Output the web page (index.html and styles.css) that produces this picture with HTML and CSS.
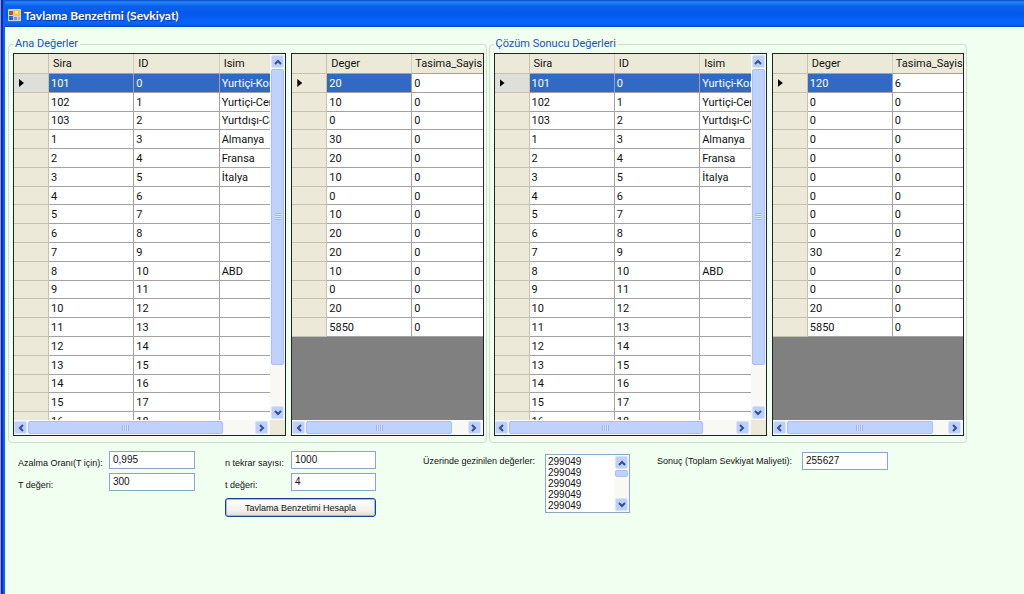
FILE: index.html
```
<!DOCTYPE html>
<html lang="tr">
<head>
<meta charset="utf-8">
<meta name="viewport" content="width=device-width, initial-scale=1">
<title>Tavlama Benzetimi (Sevkiyat)</title>
<link rel="stylesheet" href="styles.css">
</head>
<body>
<svg class="sprites" aria-hidden="true">
  <symbol id="up" viewBox="0 0 8 6"><path d="M1 5 4 2l3 3" /></symbol>
  <symbol id="down" viewBox="0 0 8 6"><path d="M1 1l3 3 3-3" /></symbol>
  <symbol id="left" viewBox="0 0 6 8"><path d="M5 1 2 4l3 3" /></symbol>
  <symbol id="right" viewBox="0 0 6 8"><path d="M1 1l3 3-3 3" /></symbol>
</svg>
<div class="window">
  <header class="titlebar">
    <svg class="app-icon" viewBox="0 0 13 13" aria-hidden="true">
      <rect width="13" height="13" rx="1" fill="#cfd3da"/>
      <rect x="1" y="2" width="4" height="4" fill="#c2502c"/>
      <rect x="6" y="1" width="6" height="6" fill="#f3c63a"/>
      <rect x="7" y="2" width="3" height="3" fill="#fbe58a"/>
      <rect x="1" y="7" width="4" height="4" fill="#2f5fc4"/>
      <rect x="6" y="8" width="3" height="3" fill="#8b97ad"/>
      <rect x="10" y="8" width="2" height="3" fill="#a9b0bf"/>
      <rect y="12" width="13" height="1" fill="#5c6f9a"/>
    </svg>
    <h1 class="title">Tavlama Benzetimi (Sevkiyat)</h1>
  </header>
  <main class="client">
    <div class="groups" id="groups"></div>
    <form class="params">
      <div class="fields fields-a">
        <label for="rate">Azalma Oranı(T için):</label><input id="rate" type="text" value="0,995">
        <label for="temp">T değeri:</label><input id="temp" type="text" value="300">
      </div>
      <div class="fields fields-b">
        <label for="repeat">n tekrar sayısı:</label><input id="repeat" type="text" value="1000">
        <label for="t">t değeri:</label><input id="t" type="text" value="4">
        <button class="run" type="button">Tavlama Benzetimi Hesapla</button>
      </div>
      <div class="visited">
        <label for="visited">Üzerinde gezinilen değerler:</label>
        <div class="listbox">
          <textarea id="visited" readonly>299049
299049
299049
299049
299049</textarea>
          <div class="vbar">
            <button class="arrow" type="button" aria-label="Yukarı"><svg><use href="#up"/></svg></button>
            <div class="track"><div class="thumb thumb-short"></div></div>
            <button class="arrow" type="button" aria-label="Aşağı"><svg><use href="#down"/></svg></button>
          </div>
        </div>
      </div>
      <div class="result">
        <label for="result">Sonuç (Toplam Sevkiyat Maliyeti):</label><input id="result" type="text" value="255627">
      </div>
    </form>
  </main>
</div>
<script src="grids.js"></script>
</body>
</html>
```
FILE: grids.js
```
const places = [
  ['101', '0', 'Yurtiçi-Kor'], ['102', '1', 'Yurtiçi-Cer'], ['103', '2', 'Yurtdışı-Ce'],
  ['1', '3', 'Almanya'], ['2', '4', 'Fransa'], ['3', '5', 'İtalya'],
  ['4', '6', ''], ['5', '7', ''], ['6', '8', ''], ['7', '9', ''], ['8', '10', 'ABD'],
  ['9', '11', ''], ['10', '12', ''], ['11', '13', ''], ['12', '14', ''], ['13', '15', ''],
  ['14', '16', ''], ['15', '17', ''], ['16', '18', '']
];
const initial = ['20', '10', '0', '30', '20', '10', '0', '10', '20', '20', '10', '0', '20', '5850'].map(v => [v, '0']);
const solved = [
  ['120', '6'], ['0', '0'], ['0', '0'], ['0', '0'], ['0', '0'], ['0', '0'], ['0', '0'],
  ['0', '0'], ['0', '0'], ['30', '2'], ['0', '0'], ['0', '0'], ['20', '0'], ['5850', '0']
];

const arrow = (dir, label) =>
  `<button class="arrow" type="button" aria-label="${label}"><svg><use href="#${dir}"/></svg></button>`;

function table(kind, heads, rows) {
  const cols = '<col class="col-mark">' + heads.map(() => '<col class="col-data">').join('');
  const head = '<td class="mark"></td>' + heads.map(h => `<th scope="col">${h}</th>`).join('');
  const body = rows.map((r, i) =>
    `<tr><td class="mark">${i ? '' : '<span class="pointer"></span>'}</td>${r.map(c => `<td>${c}</td>`).join('')}</tr>`).join('');
  return `<table class="grid grid-${kind}"><colgroup>${cols}</colgroup><thead><tr>${head}</tr></thead><tbody>${body}</tbody></table>`;
}

function pane(kind, heads, rows) {
  const vbar = kind === 'places'
    ? `<div class="vbar">${arrow('up', 'Yukarı')}<div class="track"><div class="thumb thumb-tall"><i class="grip"></i></div></div>${arrow('down', 'Aşağı')}</div>`
    : '';
  return `<div class="pane pane-${kind}"><div class="view">${table(kind, heads, rows)}</div>${vbar}` +
    `<div class="hbar">${arrow('left', 'Sola')}<div class="track"><div class="thumb thumb-wide"><i class="grip"></i></div></div>${arrow('right', 'Sağa')}</div></div>`;
}

const group = (title, values) =>
  `<fieldset class="group"><legend>${title}</legend><div class="panes">` +
  pane('places', ['Sira', 'ID', 'Isim'], places) +
  pane('values', ['Deger', 'Tasima_Sayis'], values) + '</div></fieldset>';

document.getElementById('groups').innerHTML =
  group('Ana Değerler', initial) + group('Çözüm Sonucu Değerleri', solved);
```
FILE: styles.css
```
* { box-sizing: border-box; }

body {
  margin: 0;
  background: #f0fff0;
  color: #111;
  font: 11px/14px Roboto, "Liberation Sans", Arial, sans-serif;
}

.sprites { position: absolute; width: 0; height: 0; }

.window {
  min-height: 100vh;
  border-left: 5px solid #0a3fd8;
  border-image: linear-gradient(to right, #8d9ad0 0 1px, #0a2cb8 1px 3px, #1560ea 3px 5px) 0 0 0 5;
}

.titlebar {
  display: flex;
  align-items: center;
  gap: 3px;
  height: 27px;
  padding: 4px 3px 0;
  background: linear-gradient(#0848c8 0, #2a86f8 2px, #0a62ee 6px, #0558ea 14px, #0566fb 22px, #0560f0 25px, #0444c4 27px);
}

.app-icon { width: 13px; height: 13px; }

.title {
  margin: 0;
  color: #fff;
  font: bold 12px/14px Lato, "Open Sans", sans-serif;
  text-shadow: 1px 1px 0 #0a3aa0;
}

.client { padding: 10px 0 0 3px; }

.groups {
  display: grid;
  grid-template-columns: 1fr 1fr;
  gap: 2px;
  margin-right: 57px;
}

.group {
  min-width: 0;
  margin: 0;
  padding: 2px 2px 6px 4px;
  border: 1px solid #cfdcc8;
  border-radius: 4px;
}

.group legend {
  height: 14px;
  padding: 0 2px;
  color: #1b4fc0;
}

.panes {
  display: grid;
  grid-template-columns: 273fr 192fr;
  gap: 5px;
}

.pane {
  display: grid;
  grid-template-columns: 1fr auto;
  grid-template-rows: 366px 15px;
  min-width: 0;
  border: 1px solid #1c2620;
  background: #ece9d8;
}

.view { min-width: 0; overflow: hidden; background: #808080; }
.pane-values .view, .pane-values .hbar { grid-column: 1 / -1; }

.grid {
  width: 100%;
  border-spacing: 0;
  table-layout: fixed;
  background: #fff;
}

.grid-places { width: 291px; height: 377px; }
.grid-values { width: 205px; height: 283px; }
.col-mark { width: 35px; }

.grid th {
  height: 20px;
  padding: 1px 4px 0;
  border-right: 1px solid #d2cfbe;
  border-bottom: 1px solid #a5a394;
  background: #ece9d8;
  font-weight: normal;
  text-align: left;
}

.grid-values th:last-child { padding: 1px 0 0 3px; }

.grid td {
  padding: 2px 2px 0;
  border-right: 1px solid #a2a2a2;
  border-bottom: 1px solid #a2a2a2;
  white-space: nowrap;
}

.grid .mark {
  padding: 0 5px;
  border-color: #c5c2b2;
  background: #ece9d8;
}

.grid tbody tr:first-child td:nth-child(2),
.grid-places tbody tr:first-child td:not(.mark) {
  background: #316ac5;
  color: #fff;
}

.grid-places tbody tr:first-child .mark { background: #dedfd8; }

.pointer {
  display: block;
  width: 5px;
  height: 8px;
  background: #000;
  clip-path: polygon(0 0, 100% 50%, 0 100%);
}

.vbar, .hbar { display: flex; gap: 1px; background: #f8f8f4; }
.vbar { flex-direction: column; width: 15px; padding: 1px; }
.hbar { padding: 1px 2px 1px 0; }

.arrow {
  display: grid;
  flex: none;
  place-items: center;
  width: 13px;
  height: 13px;
  padding: 0;
  border: 1px solid #d8e4ff;
  border-radius: 2px;
  background: #bdd0fb;
}

.arrow svg {
  width: 8px;
  height: 8px;
  fill: none;
  stroke: #31508c;
  stroke-width: 2;
}

.track { flex: 1; min-width: 0; min-height: 0; }

.thumb {
  display: grid;
  place-items: center;
  border: 1px solid #a9c0f2;
  border-radius: 2px;
  background: #bfd1fd;
}

.thumb-tall { height: 88%; }
.thumb-short { height: 7px; }
.thumb-wide { width: 86%; height: 13px; }
.pane-values .thumb-wide { width: 91%; }

.grip { width: 7px; height: 6px; background: repeating-linear-gradient(to right, #a0b6ea 0 1px, #dde8ff 1px 2px); }
.vbar .grip { width: 6px; height: 7px; background: repeating-linear-gradient(#a0b6ea 0 1px, #dde8ff 1px 2px); }

.params {
  display: flex;
  flex-wrap: wrap;
  align-items: flex-start;
  padding: 8px 0 0 10px;
  font-family: "Liberation Sans", Arial, sans-serif;
  font-size: 9px;
}

.fields { display: grid; row-gap: 4px; }
.fields-a { grid-template-columns: 91px 86px; margin-right: 30px; }
.fields-b { grid-template-columns: 66px 85px; margin-right: 47px; }
.fields label { padding-top: 5px; height: 17px; white-space: nowrap; }

.params input {
  width: 100%;
  height: 18px;
  padding: 0 3px 1px;
  border: 1px solid #8aa7bf;
  background: #fff;
  color: #111;
  font: 10px/14px "Liberation Sans", Arial, sans-serif;
}

.run {
  grid-column: 1 / -1;
  height: 19px;
  margin-top: 3px;
  padding: 0;
  border: 1px solid #1c3f8c;
  border-radius: 3px;
  background: linear-gradient(#fff, #f1f0ea 70%, #dddbd0);
  box-shadow: inset 0 0 0 1px #9db9ee;
  color: #111;
  font: inherit;
}

.visited { display: grid; grid-template-columns: 122px 85px; margin: 3px 27px 0 0; }
.visited label { white-space: nowrap; }
.listbox { display: flex; height: 59px; border: 1px solid #8aa7bf; background: #fff; }

.listbox textarea {
  flex: 1;
  min-width: 0;
  padding: 1px 2px;
  border: 0;
  outline: 0;
  overflow: hidden;
  resize: none;
  background: #fff;
  color: #111;
  font: 10px/11px "Liberation Sans", Arial, sans-serif;
}

.result { display: grid; grid-template-columns: 145px 86px; margin-top: 1px; }
.result label { padding-top: 2px; white-space: nowrap; }
```
